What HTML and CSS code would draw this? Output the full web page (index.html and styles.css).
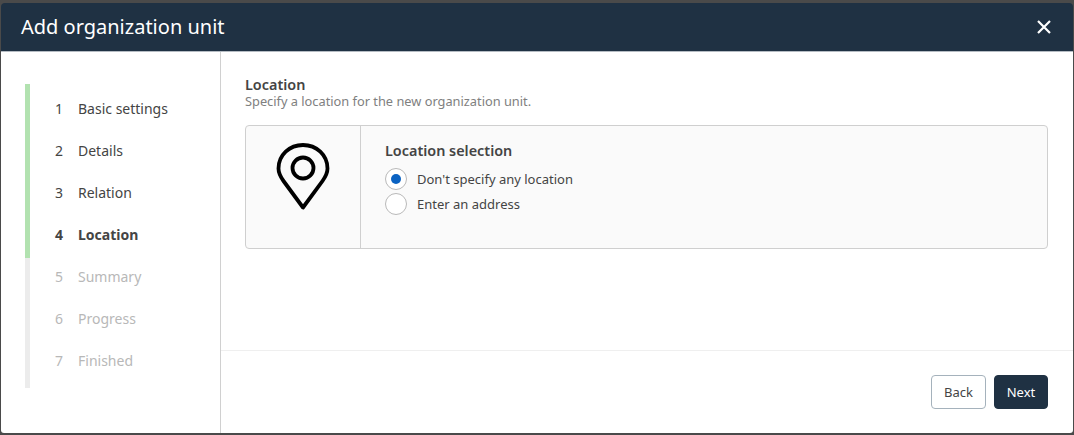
FILE: index.html
```html
<!DOCTYPE html>
<html lang="en">
<head>
<meta charset="utf-8">
<title>Add organization unit</title>
<link rel="stylesheet" href="styles.css">
</head>
<body>
<div class="dialog">
  <header class="header">
    <h1 class="title">Add organization unit</h1>
    <svg class="close" width="14" height="14" viewBox="0 0 14 14"><path d="M1 1 13 13M13 1 1 13" fill="none" stroke="#fff" stroke-width="2.2"/></svg>
  </header>
  <div class="main">
    <nav class="sidebar">
      <ol class="steps">
        <li class="step done"><span class="num">1</span>Basic settings</li>
        <li class="step done"><span class="num">2</span>Details</li>
        <li class="step done"><span class="num">3</span>Relation</li>
        <li class="step done current"><span class="num">4</span>Location</li>
        <li class="step todo"><span class="num">5</span>Summary</li>
        <li class="step todo"><span class="num">6</span>Progress</li>
        <li class="step todo"><span class="num">7</span>Finished</li>
      </ol>
    </nav>
    <div class="content">
      <section class="body">
        <h2 class="section-title">Location</h2>
        <p class="section-desc">Specify a location for the new organization unit.</p>
        <div class="card">
          <div class="card-icon">
            <svg width="54" height="68" viewBox="0 0 54 68"><path d="M27 64.500 7.500 38C4.300 33.500 2.500 30 2.500 25.500 2.500 12 13.500 2 27 2S51.500 12 51.500 25.500C51.500 30 49.700 33.500 46.500 38Z" fill="none" stroke="#000" stroke-width="3.800" stroke-linejoin="round"/><circle cx="27" cy="25" r="10.500" fill="none" stroke="#000" stroke-width="3.800"/></svg>
          </div>
          <div class="card-body">
            <h3 class="card-title">Location selection</h3>
            <label class="radio-row"><span class="radio checked"></span>Don't specify any location</label>
            <label class="radio-row"><span class="radio"></span>Enter an address</label>
          </div>
        </div>
      </section>
      <footer class="footer">
        <button class="btn btn-back">Back</button>
        <button class="btn btn-next">Next</button>
      </footer>
    </div>
  </div>
</div>
</body>
</html>
```
FILE: styles.css
```css
* { box-sizing: border-box; }
html, body { margin: 0; height: 100%; }
body { background: #4a4a4a; font-family: "Noto Sans", sans-serif; color: #444; overflow: hidden; }
.dialog { height: 435px; padding: 3px 1px 2px 1px; display: flex; flex-direction: column; }
.header { height: 49px; flex: none; background: #1f3143; border-bottom: 1px solid #b5bcc3; border-radius: 4px 4px 0 0; display: flex; align-items: center; justify-content: space-between; padding: 0 22px 2px 20px; }
.title { margin: 0; font-size: 20px; font-weight: 400; color: #fff; }
.close { display: block; margin-top: 2px; }
.main { flex: 1; display: flex; background: #fff; border-radius: 0 0 3px 3px; min-height: 0; }
.sidebar { width: 220px; flex: none; border-right: 1px solid #d0d0d0; padding: 32px 0 0 24px; }
.steps { list-style: none; margin: 0; padding: 0; }
.step { height: 42px; border-left: 5px solid #b2e2b0; padding: 0 0 6px 25px; display: flex; align-items: center; font-size: 14px; color: #444; }
.step:first-child { height: 48px; padding-top: 6px; }
.step:last-child { height: 46px; padding-bottom: 10px; }
.step.current { font-weight: 700; }
.step.todo { border-left-color: #ececec; color: #b8b8b8; }
.num { width: 23px; }
.content { flex: 1; display: flex; flex-direction: column; min-width: 0; }
.body { flex: 1; padding: 24px 25px 0 24px; }
.section-title { margin: 0; font-size: 14.400px; line-height: 18px; font-weight: 600; color: #444; }
.section-desc { margin: -1px 0 16px; font-size: 12.800px; line-height: 16px; color: #808080; }
.card { height: 124px; border: 1px solid #cfcfcf; border-radius: 4px; background: #fafafa; display: flex; }
.card-icon { width: 115px; flex: none; border-right: 1px solid #cfcfcf; display: flex; justify-content: center; padding-top: 17px; padding-right: 1px; }
.card-body { padding: 15px 24px; }
.card-title { margin: 0 0 6px; font-size: 14.400px; line-height: 19px; font-weight: 600; color: #444; }
.radio-row { display: flex; align-items: center; height: 25px; font-size: 13px; color: #444; }
.radio { width: 22px; height: 22px; border: 1px solid #b9b9b9; border-radius: 50%; background: #fff; margin-right: 10px; display: flex; align-items: center; justify-content: center; }
.radio.checked::after { content: ""; width: 10px; height: 10px; border-radius: 50%; background: #0a62c2; }
.footer { height: 83px; flex: none; border-top: 1px solid #efefef; display: flex; justify-content: flex-end; gap: 8px; padding: 24px 25px 0 0; }
.btn { height: 34px; border-radius: 4px; font-family: inherit; font-size: 13px; padding: 0; }
.btn-back { width: 55px; background: #fff; border: 1px solid #a5b2bc; color: #444; }
.btn-next { width: 54px; background: #1f3143; border: 1px solid #1f3143; color: #fff; }
```
